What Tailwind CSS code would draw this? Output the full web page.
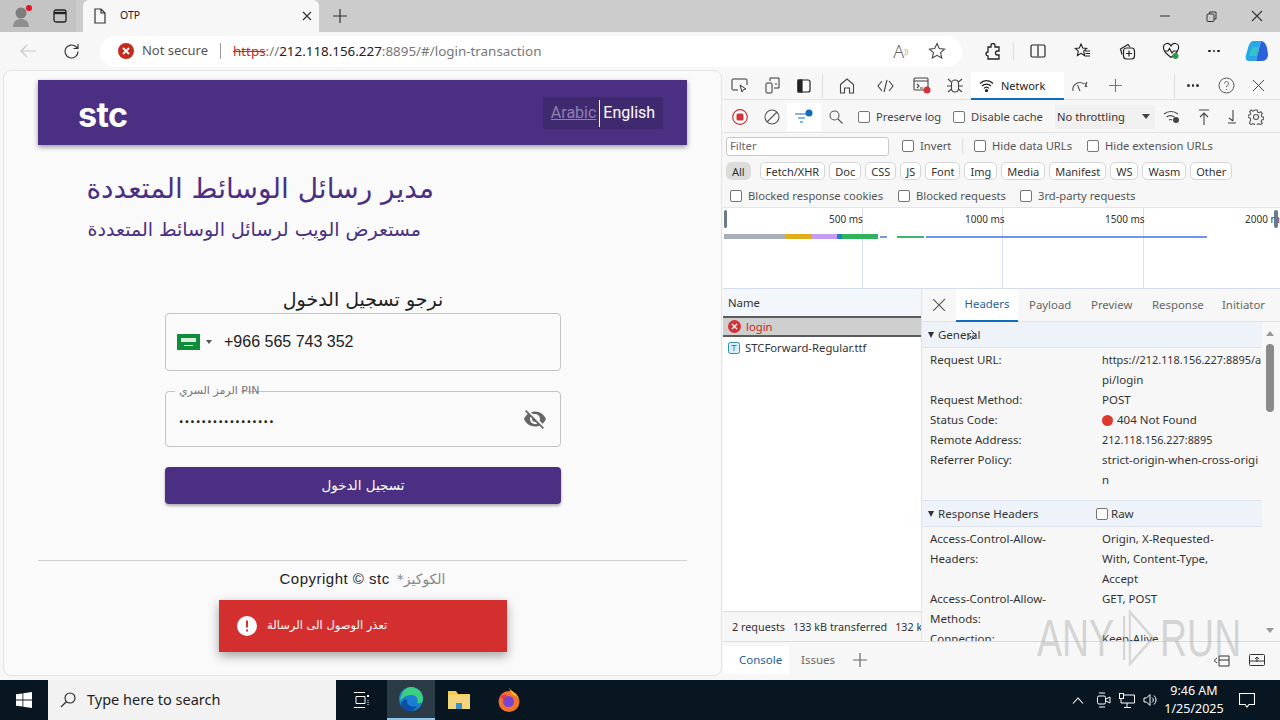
<!DOCTYPE html>
<html lang="en">
<head>
<meta charset="UTF-8">
<title>OTP</title>
<script src="https://cdn.jsdelivr.net/npm/@tailwindcss/browser@4"></script>
</head>
<body class="w-[1280px] h-[720px] overflow-hidden bg-[#f7f7f7] font-['Noto_Sans','DejaVu_Sans',sans-serif] text-[#444]">

<!-- tab strip -->
<div class="h-[32px] bg-[#cccccc] flex items-end relative">
  <div class="w-[44px] h-[32px] flex items-center justify-center bg-[#c4c4c4] relative">
    <svg class="w-[22px] h-[24px]" viewBox="0 0 22 24"><circle cx="10" cy="9" r="5.5" fill="#7d7d7d"/><path d="M2 23c0-6 4-8 8-8s8 2 8 8z" fill="#8f8f8f"/><circle cx="18" cy="4" r="3" fill="#e81123"/></svg>
  </div>
  <div class="w-[32px] h-[32px] mr-[7px] flex items-center justify-center bg-[#c4c4c4]">
    <svg class="w-[14px] h-[14px]" viewBox="0 0 14 14" fill="none" stroke="#222" stroke-width="1.3"><rect x="1" y="1" width="12" height="12" rx="2"/><path d="M1 4h12" stroke-width="2.4"/></svg>
  </div>
  <div class="w-[236px] h-[32px] bg-[#f7f7f7] rounded-t-[6px] flex items-center pl-[11px] pr-[7px] text-[10.5px] text-[#222]">
    <svg class="w-[12px] h-[16px] mr-[14px]" viewBox="0 0 12 16" fill="none" stroke="#333" stroke-width="1.2"><path d="M1 1h6l4 4v10H1zM7 1v4h4"/></svg>
    <span class="flex-1">OTP</span>
    <svg class="w-[10px] h-[10px]" viewBox="0 0 10 10" stroke="#333" stroke-width="1.2"><path d="M1 1l8 8M9 1l-8 8"/></svg>
  </div>
  <div class="w-[42px] h-[32px] flex items-center justify-center">
    <svg class="w-[14px] h-[14px]" viewBox="0 0 14 14" stroke="#333" stroke-width="1.2"><path d="M7 0v14M0 7h14"/></svg>
  </div>
  <div class="flex-1"></div>
  <div class="flex h-[32px] items-center">
    <div class="w-[46px] flex justify-center"><svg class="w-[10px] h-[10px]" viewBox="0 0 10 10" stroke="#333"><path d="M0 5h10"/></svg></div>
    <div class="w-[46px] flex justify-center"><svg class="w-[11px] h-[11px]" viewBox="0 0 11 11" fill="none" stroke="#333"><rect x="1" y="3" width="7" height="7.5" rx="1"/><path d="M3.5 3V1h6.5v7H8"/></svg></div>
    <div class="w-[46px] flex justify-center"><svg class="w-[12px] h-[12px]" viewBox="0 0 12 12" stroke="#333" stroke-width="1.1"><path d="M1 1l10 10M11 1L1 11"/></svg></div>
  </div>
</div>

<!-- toolbar -->
<div class="h-[36px] pt-[2px] flex items-center bg-[#f7f7f7]">
  <div class="w-[56px] flex justify-center">
    <svg class="w-[16px] h-[14px]" viewBox="0 0 16 14" fill="none" stroke="#c8c8c8" stroke-width="1.2"><path d="M16 7H1M7 1L1 7l6 6"/></svg>
  </div>
  <div class="w-[32px] flex justify-center">
    <svg class="w-[17px] h-[17px]" viewBox="0 0 17 17" fill="none" stroke="#333" stroke-width="1.2"><path d="M15 8.500a6.500 6.500 0 1 1-2-4.700L15 5.500M15 1v4.500h-4.500"/></svg>
  </div>
  <div class="w-[863px] h-[31px] ml-[12px] bg-white rounded-full flex items-center pl-[18px] pr-[16px]">
    <svg class="w-[16px] h-[16px] mr-[8px]" viewBox="0 0 16 16"><circle cx="8" cy="8" r="8" fill="#c42b1c"/><path d="M5 5l6 6M11 5l-6 6" stroke="#fff" stroke-width="1.800"/></svg>
    <span class="text-[#555] text-[13px]">Not secure</span>
    <span class="w-px h-[16px] bg-[#999] mx-[12px]"></span>
    <span class="text-[#c42b1c] line-through text-[13.400px]">https</span><span class="text-[#777] text-[13.400px]">://</span><span class="text-[#222] text-[13.400px]">212.118.156.227</span><span class="text-[#777] text-[13.400px]">:8895/#/login-transaction</span>
    <div class="flex-1"></div>
    <span class="text-[#666] text-[18px] font-light mr-[20px]">A<sup class="text-[7px]">))</sup></span>
    <svg class="w-[18px] h-[18px]" viewBox="0 0 18 18" fill="none" stroke="#444" stroke-width="1.100"><path d="M9 1.500l2.300 5 5.200.6-3.900 3.600 1.100 5.300L9 13.300 4.300 16l1.100-5.300L1.500 7.100l5.200-.6z"/></svg>
  </div>
  <div class="flex items-center ml-[14px] -translate-x-[1px]">
    <div class="w-[35px] flex justify-center">
      <svg class="w-[16px] h-[17px]" viewBox="0 0 16 17" fill="none" stroke="#222" stroke-width="1.300"><path d="M6 2.500a2 2 0 0 1 4 0V4h4v4h-1.500a2 2 0 0 0 0 4H14v4H3v-3a2 2 0 0 1 0-4V4h3z"/></svg>
    </div>
    <span class="w-px h-[18px] bg-[#ddd] mx-[3px]"></span>
    <div class="w-[42px] flex justify-center">
      <svg class="w-[16px] h-[14px]" viewBox="0 0 16 14" fill="none" stroke="#222" stroke-width="1.200"><path d="M7 1H2.500A1.500 1.500 0 0 0 1 2.500v9A1.500 1.500 0 0 0 2.500 13H7M9 1h4.500A1.500 1.500 0 0 1 15 2.500v9a1.500 1.500 0 0 1-1.500 1.500H9M8 0v14"/></svg>
    </div>
    <div class="w-[46px] flex justify-center">
      <svg class="w-[17px] h-[16px]" viewBox="0 0 17 16" fill="none" stroke="#222" stroke-width="1.100"><path d="M7 1l1.700 4 4 .4-3 2.700.9 4.400L7 10.300 3.400 12.500l.9-4.400-3-2.700 4-.4zM11 8h5M11.500 10.500H16M10.500 13H16"/></svg>
    </div>
    <div class="w-[44px] flex justify-center">
      <svg class="w-[17px] h-[17px]" viewBox="0 0 17 17" fill="none" stroke="#222" stroke-width="1.200"><path d="M3 11.500L1.500 6 9 1.500l2 2.500"/><rect x="4.500" y="5" width="11" height="11" rx="3"/><path d="M10 7.500v6M7 10.500h6"/></svg>
    </div>
    <div class="w-[44px] flex justify-center relative">
      <svg class="w-[18px] h-[18px]" viewBox="0 0 18 18" fill="none" stroke="#222" stroke-width="1.200"><path d="M9 15.500C5 12.500 1.500 9.500 1.500 6A3.800 3.800 0 0 1 9 4.500 3.800 3.800 0 0 1 16.500 6c0 3.500-3.500 6.500-7.500 9.500zM3 9h3l1.500-2.500L10 11l1.500-2H15"/><circle cx="13.500" cy="14" r="3" fill="#2e9a44" stroke="none"/></svg>
    </div>
    <div class="w-[42px] flex justify-center items-center gap-[2px]">
      <span class="w-[2.500px] h-[2.500px] rounded-full bg-[#222]"></span><span class="w-[2.500px] h-[2.500px] rounded-full bg-[#222]"></span><span class="w-[2.500px] h-[2.500px] rounded-full bg-[#222]"></span>
    </div>
    <div class="w-[44px] flex justify-center">
      <svg class="w-[24px] h-[24px]" viewBox="0 0 24 24"><path d="M8 2h8l-5 20H4c-3 0-4-3-3-6l2-7c1-4 3-7 5-7z" fill="#27a6e8"/><path d="M16 2c3 0 5 3 6 7l1 6c0 4-2 7-6 7h-6l5-20z" fill="#2b62d9"/><path d="M7 8h7l-3 9H4z" fill="#36c2c6"/></svg>
    </div>
  </div>
</div>

<div class="flex h-[612px]">
  <!-- page -->
  <div class="w-[719px] h-[606px] mt-[2px] ml-[3px] mr-[1px] shrink-0 bg-[#fafafa] rounded-[8px] border border-[#e4e4e4] pt-[9px] px-[34px] font-['Roboto',sans-serif] relative">
    <div class="w-[649px] h-[65px] bg-[#4a2f83] shadow-[0_2px_5px_rgba(0,0,0,0.4)] flex items-center justify-between pl-[40px] pr-[24px]">
      <span class="text-white font-bold text-[34px] font-['Inter',sans-serif] tracking-[-0.600px] pt-[3px]">stc</span>
      <div class="w-[120px] h-[32px] bg-[#3f2a6f] flex items-center justify-center text-[16px] pt-[1px]">
        <span class="text-[#8f80b0] underline pr-[3px]">Arabic</span>
        <span class="w-px h-[27px] bg-white"></span>
        <span class="text-white pl-[3px]">English</span>
      </div>
    </div>
    <h1 class="w-[348px] ml-[48px] mt-[24px] h-[40px] text-right text-[#4a2f83] text-[28px] leading-[40px] whitespace-nowrap font-['DejaVu_Sans',sans-serif]" dir="rtl">مدير رسائل الوسائط المتعددة</h1>
    <h2 class="w-[335px] ml-[48px] mt-[5px] h-[30px] text-right text-[#4a2f83] text-[19px] leading-[30px] whitespace-nowrap font-['DejaVu_Sans',sans-serif]" dir="rtl">مستعرض الويب لرسائل الوسائط المتعددة</h2>
    <div class="w-[396px] ml-[127px] mt-[40px] flex flex-col">
      <p class="text-center text-[#222] text-[19px] leading-[30px] font-['DejaVu_Sans',sans-serif]" dir="rtl">نرجو تسجيل الدخول</p>
      <div class="h-[58px] -mt-[1px] border border-[#c4c4c4] rounded-[4px] flex items-center pl-[11px]">
        <svg class="w-[23px] h-[16px]" viewBox="0 0 23 16"><rect width="23" height="16" fill="#0e8c3a"/><rect x="4" y="4" width="15" height="4" fill="#d8eedd"/><rect x="7" y="11" width="9" height="1" fill="#d8eedd"/></svg>
        <span class="ml-[6px] w-0 h-0 border-x-[3px] border-x-transparent border-t-[4px] border-t-[#555]"></span>
        <span class="ml-[12px] text-[#222] text-[16px] font-['Liberation_Sans',sans-serif]">+966 565 743 352</span>
      </div>
      <div class="h-[56px] mt-[20px] border border-[#c4c4c4] rounded-[4px] flex items-center justify-between pl-[13px] pr-[13px] relative">
        <span class="absolute left-[9px] -top-[2px] w-[66px] h-[3px] bg-[#fafafa]"></span>
        <span class="absolute left-[13px] -top-[8px] text-[#777] text-[11px] leading-[14px] whitespace-nowrap font-['DejaVu_Sans',sans-serif]">الرمز السري PIN</span>
        <span class="text-[#222] text-[13px] tracking-[1.250px] mt-[5px]">•••••••••••••••••</span>
        <svg class="w-[24px] h-[24px]" viewBox="0 0 24 24" fill="#666"><path d="M12 7c2.760 0 5 2.240 5 5 0 .65-.13 1.260-.36 1.830l2.920 2.920c1.510-1.260 2.700-2.890 3.430-4.750-1.730-4.390-6-7.500-11-7.500-1.400 0-2.740.25-3.980.7l2.160 2.160C10.740 7.130 11.350 7 12 7zM2 4.270l2.280 2.280.46.46C3.080 8.300 1.780 10.020 1 12c1.730 4.390 6 7.500 11 7.500 1.550 0 3.030-.3 4.380-.84l.42.42L19.730 22 21 20.730 3.270 3 2 4.270zM7.530 9.800l1.550 1.550c-.05.21-.08.430-.08.650 0 1.660 1.340 3 3 3 .22 0 .44-.03.65-.08l1.550 1.550c-.67.330-1.410.530-2.200.530-2.760 0-5-2.240-5-5 0-.79.200-1.530.530-2.200z"/></svg>
      </div>
      <button class="h-[37px] mt-[20px] bg-[#4a2f83] text-white rounded-[4px] text-[13.500px] shadow-[0_2px_3px_rgba(0,0,0,0.3)] font-['DejaVu_Sans',sans-serif]" dir="rtl">تسجيل الدخول</button>
    </div>
    <div class="w-[649px] border-t border-[#cfcfcf] mt-[56px] flex justify-center items-center pt-[9px] gap-[7px]">
      <span class="text-[#222] text-[15px] tracking-[0.500px] leading-[18px] font-['Liberation_Sans',sans-serif]">Copyright © stc</span>
      <span class="text-[#888] text-[14px] leading-[18px] font-['DejaVu_Sans',sans-serif]" dir="rtl">الكوكيز*</span>
    </div>
    <!-- toast -->
    <div class="absolute left-[215px] top-[529px] w-[288px] h-[52px] bg-[#d32f2f] shadow-[0_4px_10px_rgba(0,0,0,0.35)] flex items-center pl-[18px] text-white text-[11.500px] font-['DejaVu_Sans',sans-serif]">
      <svg class="w-[20px] h-[20px] mr-[10px] shrink-0" viewBox="0 0 20 20"><circle cx="10" cy="10" r="10" fill="#fff"/><path d="M9 4.500h2v7H9zM9 13.500h2v2H9z" fill="#d32f2f"/></svg>
      <span dir="rtl">تعذر الوصول الى الرسالة</span>
    </div>
  </div>

  <!-- devtools -->
  <div class="w-[557px] text-[11.200px] leading-none relative">
    <div class="h-[32px] flex items-center pt-[4px] border-b border-[#e2e2e2]">
      <div class="w-[33px] flex justify-center"><svg class="w-[17px] h-[15px]" viewBox="0 0 17 15" fill="none" stroke="#333"><path d="M7 12H2a1 1 0 0 1-1-1V2a1 1 0 0 1 1-1h13a1 1 0 0 1 1 1v5M9 7l2 7 1.500-2.500L15 11z"/></svg></div>
      <div class="w-[32px] flex justify-center"><svg class="w-[15px] h-[17px]" viewBox="0 0 15 17" fill="none" stroke="#333"><rect x="1" y="6" width="6" height="10" rx="1"/><path d="M5 4V1h9v10H9M10 7h2"/></svg></div>
      <div class="w-[32px] flex justify-center"><svg class="w-[14px] h-[14px]" viewBox="0 0 14 14" fill="none" stroke="#222" stroke-width="1.200"><rect x="1" y="1" width="12" height="12" rx="2"/><rect x="1" y="1" width="4" height="12" fill="#222"/></svg></div>
      <span class="w-px h-[24px] bg-[#ddd] ml-[2px]"></span>
      <div class="w-[39px] flex justify-center ml-[4px]"><svg class="w-[16px] h-[16px]" viewBox="0 0 16 16" fill="none" stroke="#444" stroke-width="1.100"><path d="M1.500 6.500L8 1l6.500 5.500V15h-4v-5h-5v5h-4z"/></svg></div>
      <div class="w-[39px] flex justify-center"><svg class="w-[17px] h-[14px]" viewBox="0 0 17 14" fill="none" stroke="#444" stroke-width="1.100"><path d="M5 2L1 7l4 5M12 2l4 5-4 5M10 1L7 13"/></svg></div>
      <div class="w-[34px] flex justify-center"><svg class="w-[18px] h-[17px]" viewBox="0 0 18 17" fill="none" stroke="#444" stroke-width="1.100"><rect x="1" y="1" width="14" height="12" rx="1"/><path d="M1 4h14M4 7l2 2-2 2M7 11h3"/><circle cx="14" cy="13" r="3.500" fill="#d13438" stroke="none"/></svg></div>
      <div class="w-[32px] flex justify-center"><svg class="w-[16px] h-[17px]" viewBox="0 0 16 17" fill="none" stroke="#444" stroke-width="1.100"><rect x="4.500" y="3" width="7" height="12" rx="3.500"/><path d="M1 2l3.500 3M15 2l-3.500 3M0 9h4.500M16 9h-4.500M1 15l3.500-3M15 15l-3.500-3"/></svg></div>
      <div class="w-[93px] h-[28px] -mb-px bg-white border-b-[2px] border-[#0f6cbd] flex items-center pl-[8px] gap-[7px] text-[#222] text-[11px]">
        <svg class="w-[15px] h-[13px] shrink-0" viewBox="0 0 15 13" fill="none" stroke="#222" stroke-width="1.200"><path d="M1 4.500a9 9 0 0 1 13 0M3 7a6.200 6.200 0 0 1 9 0M5 9.500a3 3 0 0 1 5 0"/><circle cx="7.500" cy="11.500" r="1" fill="#222"/></svg>
        <span>Network</span>
      </div>
      <div class="w-[34px] flex justify-center -translate-x-[1px]"><svg class="w-[18px] h-[13px]" viewBox="0 0 18 13" fill="none" stroke="#555" stroke-width="1.100"><path d="M2 12a7 7 0 0 1 11-7M9 12L6.500 6M14 4l2 4M16 3l-2 5"/></svg></div>
      <div class="w-[34px] flex justify-center"><svg class="w-[13px] h-[13px]" viewBox="0 0 13 13" stroke="#777" stroke-width="1.100"><path d="M6.500 0v13M0 6.500h13"/></svg></div>
      <span class="w-px h-[24px] bg-[#ddd] ml-[42px]"></span>
      <div class="w-[36px] flex justify-center items-center gap-[2px]"><span class="w-[2.500px] h-[2.500px] rounded-full bg-[#333]"></span><span class="w-[2.500px] h-[2.500px] rounded-full bg-[#333]"></span><span class="w-[2.500px] h-[2.500px] rounded-full bg-[#333]"></span></div>
      <div class="w-[30px] flex justify-center"><svg class="w-[17px] h-[17px]" viewBox="0 0 17 17" fill="none" stroke="#555"><circle cx="8.500" cy="8.500" r="7.500"/><path d="M6.500 6.500a2 2 0 1 1 3 1.800c-.7.400-1 .8-1 1.700M8.500 12v1"/></svg></div>
      <div class="w-[34px] flex justify-center"><svg class="w-[11px] h-[11px]" viewBox="0 0 11 11" stroke="#444"><path d="M0 0l11 11M11 0L0 11"/></svg></div>
    </div>
    <!-- network toolbar -->
    <div class="h-[33px] pt-[1px] flex items-center border-b border-[#e2e2e2] text-[#444] whitespace-nowrap">
      <div class="w-[34px] flex justify-center"><svg class="w-[16px] h-[16px]" viewBox="0 0 16 16"><circle cx="8" cy="8" r="7.300" fill="#fff" stroke="#c33" stroke-width="1.200"/><rect x="4.500" y="4.500" width="7" height="7" rx="1.500" fill="#d13438"/></svg></div>
      <div class="w-[30px] flex justify-center"><svg class="w-[16px] h-[16px]" viewBox="0 0 16 16" fill="none" stroke="#555" stroke-width="1.100"><circle cx="8" cy="8" r="7"/><path d="M3 13L13 3"/></svg></div>
      <div class="w-[34px] h-[28px] bg-white flex justify-center items-center"><svg class="w-[20px] h-[16px]" viewBox="0 0 20 16" fill="none" stroke="#0f6cbd" stroke-width="1.200"><path d="M1 5h12M4 9h7M6 13h3"/><circle cx="15" cy="4" r="3.500" fill="#0f6cbd" stroke="none"/></svg></div>
      <div class="w-[30px] flex justify-center"><svg class="w-[14px] h-[14px]" viewBox="0 0 14 14" fill="none" stroke="#555" stroke-width="1.100"><circle cx="5.500" cy="5.500" r="4.500"/><path d="M9 9l4.500 4.500"/></svg></div>
      <span class="w-[12px] h-[12px] border border-[#777] rounded-[2px] ml-[7px] mr-[6px] bg-white"></span><span class="w-[64px]">Preserve log</span>
      <span class="w-[12px] h-[12px] border border-[#777] rounded-[2px] ml-[13px] mr-[6px] bg-white"></span><span class="w-[72px]">Disable cache</span>
      <div class="w-[100px] h-[24px] ml-[12px] bg-[#f0f0f0] flex items-center pl-[2px] justify-between pr-[5px]"><span class="text-[#333]">No throttling</span><span class="w-0 h-0 border-x-[4px] border-x-transparent border-t-[5px] border-t-[#444]"></span></div>
      <div class="w-[34px] flex justify-center"><svg class="w-[18px] h-[15px]" viewBox="0 0 18 15" fill="none" stroke="#444" stroke-width="1.100"><path d="M1 5a11 11 0 0 1 14 0M3.500 8a7 7 0 0 1 8 0M6 11a3 3 0 0 1 3 0"/><circle cx="13" cy="11" r="3" fill="#444" stroke="none"/></svg></div>
      <div class="w-[30px] flex justify-center"><svg class="w-[12px] h-[16px]" viewBox="0 0 12 16" fill="none" stroke="#444" stroke-width="1.100"><path d="M1 1h10M6 16V4M2 8l4-4 4 4"/></svg></div>
      <div class="w-[26px] flex justify-center"><svg class="w-[8px] h-[14px]" viewBox="0 0 8 14" fill="none" stroke="#444" stroke-width="1.100"><path d="M0 13h8M5 0v11M1 8l4 3"/></svg></div>
      <div class="w-[22px] flex justify-center"><svg class="w-[16px] h-[16px]" viewBox="0 0 16 16" fill="none" stroke="#555" stroke-width="1.100"><circle cx="8" cy="8" r="2.500"/><path d="M6.800 1h2.400l.4 2 1.500.7 1.800-1 1.500 1.800-1.200 1.700.5 1.500 2 .4v2.400l-2 .4-.6 1.500 1.200 1.700-1.700 1.600-1.700-1.100-1.500.6-.4 2H6.800l-.4-2-1.500-.6-1.700 1.100-1.700-1.600L2.700 10.400l-.6-1.500-2-.4V6.100l2-.4.600-1.500L1.600 2.500l1.700-1.500 1.600 1.100 1.500-.6z"/></svg></div>
    </div>
    <!-- filter row -->
    <div class="h-[26px] flex items-center text-[#555] whitespace-nowrap">
      <div class="w-[163px] h-[19px] ml-[3px] bg-white border border-[#c8c8c8] rounded-[3px] flex items-center pl-[3px] text-[#666]">Filter</div>
      <span class="w-[12px] h-[12px] border border-[#777] rounded-[2px] ml-[13px] mr-[6px] bg-white"></span><span class="w-[31px]">Invert</span>
      <span class="w-px h-[16px] bg-[#ddd] ml-[11px]"></span>
      <span class="w-[12px] h-[12px] border border-[#777] rounded-[2px] ml-[11px] mr-[6px] bg-white"></span><span class="w-[80px]">Hide data URLs</span>
      <span class="w-[12px] h-[12px] border border-[#777] rounded-[2px] ml-[15px] mr-[6px] bg-white"></span><span>Hide extension URLs</span>
    </div>
    <!-- type filter -->
    <div class="h-[24px] flex items-center pl-[3px] gap-[4px] text-[#333] text-[11px]">
      <span class="h-[18px] px-[6px] mr-[5px] rounded-[6px] bg-[#dcdcdc] flex items-center">All</span>
      <span class="h-[18px] px-[5px] rounded-[5px] border border-[#d6d6d6] bg-white flex items-center">Fetch/XHR</span>
      <span class="h-[18px] px-[5px] rounded-[5px] border border-[#d6d6d6] bg-white flex items-center">Doc</span>
      <span class="h-[18px] px-[5px] rounded-[5px] border border-[#d6d6d6] bg-white flex items-center">CSS</span>
      <span class="h-[18px] px-[5px] rounded-[5px] border border-[#d6d6d6] bg-white flex items-center">JS</span>
      <span class="h-[18px] px-[5px] rounded-[5px] border border-[#d6d6d6] bg-white flex items-center">Font</span>
      <span class="h-[18px] px-[5px] rounded-[5px] border border-[#d6d6d6] bg-white flex items-center">Img</span>
      <span class="h-[18px] px-[5px] rounded-[5px] border border-[#d6d6d6] bg-white flex items-center">Media</span>
      <span class="h-[18px] px-[5px] rounded-[5px] border border-[#d6d6d6] bg-white flex items-center">Manifest</span>
      <span class="h-[18px] px-[5px] rounded-[5px] border border-[#d6d6d6] bg-white flex items-center">WS</span>
      <span class="h-[18px] px-[5px] rounded-[5px] border border-[#d6d6d6] bg-white flex items-center">Wasm</span>
      <span class="h-[18px] px-[5px] rounded-[5px] border border-[#d6d6d6] bg-white flex items-center">Other</span>
    </div>
    <!-- blocked row -->
    <div class="h-[25px] pt-[1px] flex items-center text-[#555] whitespace-nowrap border-b border-[#dfe5f0]">
      <span class="w-[12px] h-[12px] border border-[#777] rounded-[2px] ml-[7px] mr-[6px] bg-white"></span><span class="w-[135px]">Blocked response cookies</span>
      <span class="w-[12px] h-[12px] border border-[#777] rounded-[2px] ml-[15px] mr-[6px] bg-white"></span><span class="w-[89px]">Blocked requests</span>
      <span class="w-[12px] h-[12px] border border-[#777] rounded-[2px] ml-[15px] mr-[6px] bg-white"></span><span>3rd-party requests</span>
    </div>
    <!-- overview -->
    <div class="h-[81px] bg-white border-b border-[#d5dcec] relative overflow-hidden text-[10px] text-[#333]">
      <span class="absolute left-[139px] top-0 bottom-0 w-px bg-[#d8e0f0]"></span>
      <span class="absolute left-[279px] top-0 bottom-0 w-px bg-[#d8e0f0]"></span>
      <span class="absolute left-[420px] top-0 bottom-0 w-px bg-[#d8e0f0]"></span>
      <span class="absolute left-[106px] top-[6px]">500 ms</span>
      <span class="absolute left-[242px] top-[6px]">1000 ms</span>
      <span class="absolute left-[382px] top-[6px]">1500 ms</span>
      <span class="absolute left-[522px] top-[6px] whitespace-nowrap">2000 ms</span>
      <span class="absolute left-[1px] top-[2px] w-[3px] h-[18px] bg-[#6b7a8c] rounded-[2px]"></span>
      <span class="absolute right-[2px] top-[2px] w-[4px] h-[18px] bg-[#6b7a8c] rounded-[2px]"></span>
      <div class="absolute left-[1px] top-[26px] flex h-[5px] w-[155px]">
        <span class="w-[61px] bg-[#a9b0bb]"></span><span class="w-[27px] bg-[#e0ae1a]"></span><span class="w-[25px] bg-[#c79cf0]"></span><span class="w-[5px] bg-[#1b7fc4]"></span><span class="w-[36px] bg-[#2fb35c]"></span>
      </div>
      <span class="absolute left-[157px] top-[28px] w-[7px] h-[2px] bg-[#7a9bd8]"></span>
      <span class="absolute left-[174px] top-[28px] w-[27px] h-[2px] bg-[#3db868]"></span>
      <span class="absolute left-[203px] top-[28px] w-[281px] h-[2px] bg-[#6e97e8]"></span>
    </div>
    <!-- split -->
    <div class="h-[352px] flex relative">
      <div class="w-[199px] flex flex-col border-r border-[#dde3ee] bg-white overflow-hidden text-[11.300px]">
        <div class="h-[27px] shrink-0 bg-[#f3f6fb] flex items-center pl-[5px] text-[#333]">Name</div>
        <div class="h-[21px] shrink-0 bg-[#cfcfcf] border-y-[2px] border-[#5b5b5b] flex items-center pl-[5px] text-[#c42b1c] gap-[5px]">
          <svg class="w-[13px] h-[13px]" viewBox="0 0 13 13"><circle cx="6.500" cy="6.500" r="6.500" fill="#d13438"/><path d="M4 4l5 5M9 4l-5 5" stroke="#fff" stroke-width="1.300"/></svg>
          <span>login</span>
        </div>
        <div class="h-[21px] shrink-0 flex items-center pl-[5px] text-[#333] gap-[5px]">
          <svg class="w-[12px] h-[12px]" viewBox="0 0 12 12" fill="#d9eef8" stroke="#2a8fb8"><rect x=".5" y=".5" width="11" height="11" rx="2"/><path d="M3.500 3.500h5M6 3.500v5.500" fill="none"/></svg>
          <span>STCForward-Regular.ttf</span>
        </div>
        <div class="flex-1"></div>
        <div class="h-[30px] shrink-0 pt-[1px] border-t border-[#d5dcec] bg-[#f7f7f7] flex items-center pl-[9px] text-[#333] text-[10.800px] whitespace-nowrap gap-[8px] overflow-hidden">
          <span>2 requests</span><span>133 kB transferred</span><span>132 kB</span>
        </div>
      </div>
      <div class="flex-1 min-w-0 flex flex-col overflow-hidden relative text-[11.500px]">
        <div class="h-[33px] shrink-0 flex items-center border-b border-[#e2e2e2] text-[#666] text-[11.400px]">
          <div class="w-[34px] flex justify-center"><svg class="w-[12px] h-[12px]" viewBox="0 0 12 12" stroke="#555" stroke-width="1.100"><path d="M0 0l12 12M12 0L0 12"/></svg></div>
          <span class="w-[62px] h-[33px] bg-white border-b-[2px] border-[#0f6cbd] text-[#1f5f9c] flex items-center justify-center">Headers</span>
          <span class="pl-[11px] w-[73px]">Payload</span>
          <span class="w-[61px]">Preview</span>
          <span class="w-[70px]">Response</span>
          <span>Initiator</span>
        </div>
        <div class="w-[340px] flex-1 text-[#333] overflow-hidden">
          <div class="h-[26px] bg-[#eef3f9] border-b border-[#dde3ee] flex items-center pl-[6px] gap-[4px] relative"><span class="w-0 h-0 border-x-[3.500px] border-x-transparent border-t-[6px] border-t-[#333]"></span><span>General</span>
            <svg class="absolute left-[44px] top-[7px] w-[12px] h-[12px]" viewBox="0 0 12 12" fill="none" stroke="#444"><path d="M1 5l4 3-4 3M5 1l5 5-5 5"/></svg>
          </div>
          <div class="grid grid-cols-[172px_160px] pl-[8px] pt-[2px] leading-[20px]">
            <span>Request URL:</span><span><span class="text-[10.900px]">https://212.118.156.227:8895/a</span><br>pi/login</span>
            <span>Request Method:</span><span>POST</span>
            <span>Status Code:</span><span class="flex items-center gap-[4px]"><span class="w-[11px] h-[11px] rounded-full bg-[#dc3a2c]"></span>404 Not Found</span>
            <span>Remote Address:</span><span class="text-[10.800px]">212.118.156.227:8895</span>
            <span>Referrer Policy:</span><span>strict-origin-when-cross-origi<br>n</span>
          </div>
          <div class="h-[27px] mt-[10px] bg-[#eef3f9] border-y border-[#dde3ee] flex items-center pl-[6px]"><span class="w-0 h-0 border-x-[3.500px] border-x-transparent border-t-[6px] border-t-[#333] mr-[4px]"></span><span class="w-[158px]">Response Headers</span><span class="w-[12px] h-[12px] border border-[#777] rounded-[2px] bg-white mr-[3px]"></span><span>Raw</span></div>
          <div class="grid grid-cols-[172px_160px] pl-[8px] pt-[2px] leading-[20px]">
            <span>Access-Control-Allow-<br>Headers:</span><span>Origin, X-Requested-<br>With, Content-Type,<br>Accept</span>
            <span>Access-Control-Allow-<br>Methods:</span><span>GET, POST</span>
            <span>Connection:</span><span>Keep-Alive</span>
          </div>
        </div>
        <!-- detail pane scrollbar -->
        <div class="absolute right-[3px] top-[33px] bottom-0 w-[15px] flex flex-col items-center bg-[#f7f7f7]">
          <span class="mt-[9px] w-0 h-0 border-x-[4px] border-x-transparent border-b-[5px] border-b-[#999]"></span>
          <span class="mt-[8px] w-[8px] h-[68px] rounded-full bg-[#8a8a8a]"></span>
          <span class="mt-auto mb-[8px] w-0 h-0 border-x-[4px] border-x-transparent border-t-[5px] border-t-[#999]"></span>
        </div>
      </div>
    </div>
    <!-- drawer -->
    <div class="h-[37px] border-t border-[#d5dcec] flex items-center text-[11.500px]">
      <span class="w-[66px] h-[28px] bg-white flex items-center pl-[16px] text-[#1f5f9c]">Console</span>
      <span class="ml-[12px] text-[#666]">Issues</span>
      <svg class="w-[14px] h-[14px] ml-[18px]" viewBox="0 0 14 14" stroke="#666" stroke-width="1.200"><path d="M7 0v14M0 7h14"/></svg>
      <div class="flex-1"></div>
      <svg class="w-[16px] h-[14px] mr-[19px]" viewBox="0 0 16 14" fill="none" stroke="#333"><path d="M5 3h10v10H5zM5 7h10M3 5L0 7.500 3 10"/></svg>
      <svg class="w-[16px] h-[12px] mr-[15px]" viewBox="0 0 16 12" fill="none" stroke="#333"><rect x=".5" y=".5" width="15" height="11" rx="1"/><path d="M1 7h14M8 8V3M6 5l2-2 2 2"/></svg>
    </div>
    <!-- watermark -->
    <div class="absolute left-[314px] top-[540px] flex items-center gap-[4px] text-[#9a9a9a]/40 font-['Liberation_Sans',sans-serif] text-[52px] pointer-events-none scale-x-[0.72] origin-left whitespace-nowrap">
      <span>ANY</span>
      <svg class="w-[56px] h-[60px]" viewBox="0 0 56 60" fill="none" stroke="#9a9a9a" stroke-opacity=".35" stroke-width="3"><path d="M10 8v44M18 4l32 26-32 26z"/></svg>
      <span>RUN</span>
    </div>
  </div>
</div>

<!-- taskbar -->
<div class="h-[40px] bg-[#071620] flex items-center text-white relative">
  <div class="w-[48px] flex justify-center"><svg class="w-[16px] h-[16px]" viewBox="0 0 16 16" fill="#fff"><path d="M0 2.300l6.500-.9v6.200H0zM7.300 1.300L16 0v7.600H7.300zM0 8.400h6.500v6.200L0 13.700zM7.300 8.400H16V16l-8.700-1.300z"/></svg></div>
  <div class="w-[288px] h-[40px] bg-[#f2f2f2] flex items-center pl-[12px] text-[#222] text-[14.500px]">
    <svg class="w-[16px] h-[16px] mr-[11px]" viewBox="0 0 16 16" fill="none" stroke="#222" stroke-width="1.100"><circle cx="10" cy="6" r="5"/><path d="M6.500 9.500L1 15"/></svg>
    <span>Type here to search</span>
  </div>
  <div class="w-[51px] flex justify-center"><svg class="w-[15px] h-[17px]" viewBox="0 0 15 17" fill="none" stroke="#fff"><path d="M0 .5h11M2 4.500h9v7H2zM0 15.500h11"/><rect x="13" y="3" width="2" height="2" fill="#fff" stroke="none"/><path d="M14 8v5" stroke-dasharray="1 1"/></svg></div>
  <div class="w-[48px] h-[40px] bg-[#2c3c46] border-b-[2px] border-[#8fc5ea] flex justify-center items-center"><svg class="w-[24px] h-[24px]" viewBox="0 0 24 24"><circle cx="12" cy="12" r="12" fill="#1a7fd0"/><path d="M12 0a12 12 0 0 1 12 12c0 4-3 5-6 4 2-3 0-8-6-8-4 0-8 2-11 6C2 6 6 0 12 0z" fill="#3bcf86"/><path d="M8 14c0 4 5 7 10 5-1 2-4 5-8 5-5 0-8-4-8-8 2-3 6-5 6-2z" fill="#0b4fa8"/></svg></div>
  <div class="w-[48px] flex justify-center"><svg class="w-[22px] h-[18px]" viewBox="0 0 22 18"><path d="M0 0h8l2 3h12v15H0z" fill="#f6c94f"/><rect y="4" width="22" height="14" fill="#f3d57c"/><rect x="8" y="12" width="6" height="6" fill="#3f8fc9"/></svg></div>
  <div class="w-[52px] flex justify-center"><svg class="w-[22px] h-[24px]" viewBox="0 0 22 24"><circle cx="11" cy="13.500" r="10.500" fill="#f5722b"/><path d="M11 0c2 3 7 4 10 11-2-3-5-4-7-4z" fill="#fbb124"/><circle cx="10.500" cy="13.500" r="5.500" fill="#7742d6"/><path d="M2 9c2-3 5-3 7-2L6 12z" fill="#e63950"/></svg></div>
  <div class="flex-1"></div>
  <div class="flex items-center">
    <svg class="w-[12px] h-[7px] mr-[12px]" viewBox="0 0 12 7" fill="none" stroke="#fff" stroke-width="1.100"><path d="M1 6.500L6 1l5 5.500"/></svg>
    <svg class="w-[15px] h-[16px] mr-[8px]" viewBox="0 0 15 16" fill="none" stroke="#fff"><rect x="1.500" y="4" width="8" height="8" rx="1.500"/><path d="M10 7l4-2v6l-4-2M3 1h6M3 15h6"/></svg>
    <svg class="w-[16px] h-[15px] mr-[8px]" viewBox="0 0 16 15" fill="none" stroke="#fff"><rect x=".5" y=".5" width="4" height="5"/><path d="M5 2h10.500v8H2V6M8 10v4M5 14.500h7"/></svg>
    <svg class="w-[15px] h-[14px]" viewBox="0 0 15 14" fill="none" stroke="#fff"><path d="M1 5h2.500L7 1.500v11L3.500 9H1zM9 4.500a3 3 0 0 1 0 5M11 2.500a6 6 0 0 1 0 9"/></svg>
    <div class="w-[80px] -ml-[4px] text-center text-[12.500px] leading-[18px]"><div>9:46 AM</div><div>1/25/2025</div></div>
    <svg class="w-[16px] h-[15px] ml-[5px] mr-[25px]" viewBox="0 0 16 15" fill="none" stroke="#fff" stroke-width="1.100"><path d="M.5.500h15v11H10L8 14l-2-2.500H.5z"/></svg>
  </div>
</div>

</body>
</html>
